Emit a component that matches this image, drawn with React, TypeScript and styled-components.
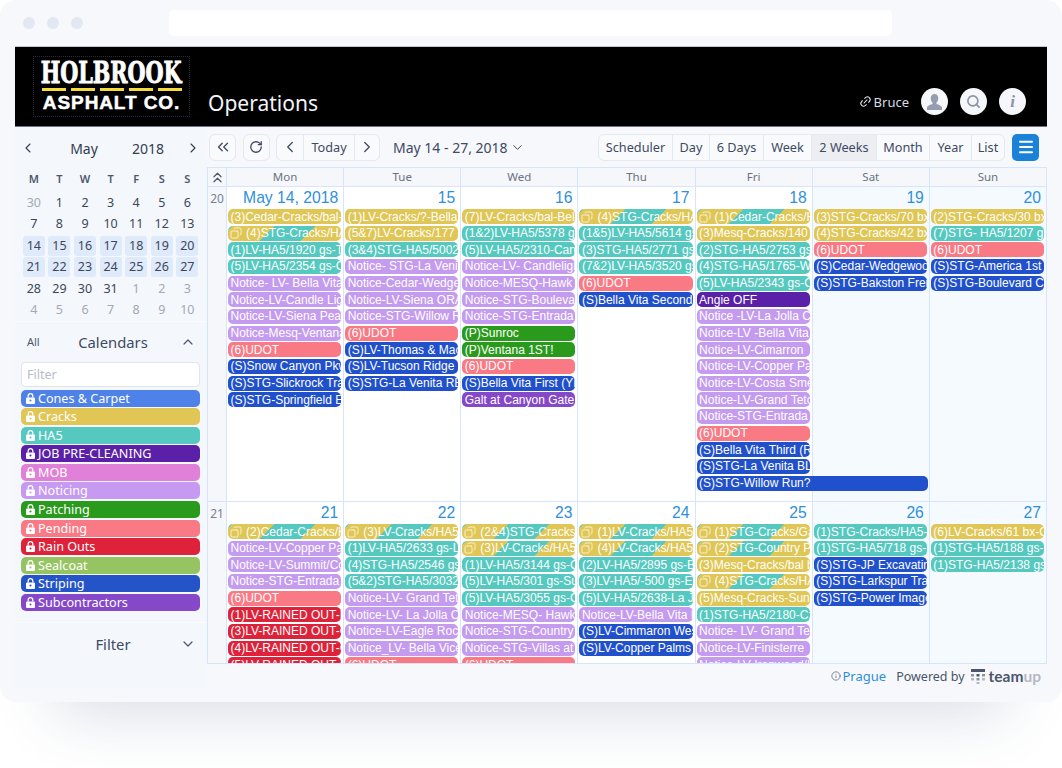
import React from 'react';
import styled, { createGlobalStyle } from 'styled-components';
import {
  ChevronDown,
  ChevronLeft,
  ChevronRight,
  ChevronUp,
  ChevronsLeft,
  ChevronsUp,
  Copy,
  Info,
  Link2,
  Menu,
  RotateCw,
  Search,
} from 'lucide-react';

const COLORS: Record<string, string> = {
  c: '#e0c655',
  h: '#55c9bf',
  n: '#c49bef',
  u: '#f97a85',
  s: '#2050cb',
  p: '#2a9a1c',
  r: '#dd2239',
  a: '#5b20a8',
  g: '#8548c9',
};

const UI_FONT = '"Noto Sans", "Open Sans", sans-serif';
const EVENT_FONT = '"Liberation Sans", Arial, sans-serif';

const GlobalStyle = createGlobalStyle`
  html {
    height: 100%;
    background: #fff;
    overflow: hidden;
  }
  body {
    margin: 0;
    height: 100%;
    font-family: ${UI_FONT};
    color: #3e4a63;
  }
`;

const Frame = styled.div`
  width: 1062px;
  height: 702px;
  box-sizing: border-box;
  background: #f6f8fb;
  border-radius: 16px;
  box-shadow: 0 66px 60px -56px rgba(60, 80, 130, 0.2);
`;

const TitleBar = styled.div`
  height: 47px;
  display: flex;
  align-items: flex-start;
  padding: 10px 170px 0 23px;
  box-sizing: border-box;
`;

const Dots = styled.div`
  display: flex;
  gap: 12px;
  width: 146px;
  padding-top: 7px;
`;

const Dot = styled.span`
  width: 12px;
  height: 12px;
  border-radius: 50%;
  background: #e2e8f2;
`;

const AddressBar = styled.div`
  flex: 1;
  height: 26px;
  background: #fff;
  border-radius: 5px;
`;

const AppShell = styled.div`
  margin: 0 15px;
  width: 1032px;
`;

const Header = styled.header`
  height: 80px;
  background: #000;
  display: flex;
  align-items: flex-end;
  padding: 0 21px 11px 18px;
  box-sizing: border-box;
  border-bottom: 1px solid #6d7280;
  box-shadow: 0 -1px 0 #c3c7d1;
`;

const Logo = styled.div`
  width: 157px;
  height: 61px;
  margin-bottom: -2px;
  border: 1px dotted #2a2a3c;
  box-sizing: border-box;
  display: flex;
  flex-direction: column;
  align-items: center;
  color: #fff;
  overflow: hidden;
`;

const LogoTop = styled.div`
  font-family: 'DejaVu Serif', serif;
  font-weight: 700;
  font-size: 30px;
  line-height: 28px;
  height: 28px;
  margin-top: 2px;
  transform: scaleX(0.69);
  white-space: nowrap;
  -webkit-text-stroke: 1px #fff;
`;

const LogoDashes = styled.div`
  display: flex;
  gap: 5px;
  margin-top: 1px;
`;

const LogoDash = styled.span`
  width: 24px;
  height: 3px;
  background: #f5dc3a;
`;

const LogoBottom = styled.div`
  font-family: ${EVENT_FONT};
  font-weight: 700;
  font-size: 19px;
  line-height: 20px;
  letter-spacing: 0.9px;
  margin-top: 2px;
  white-space: nowrap;
  -webkit-text-stroke: 0.5px #fff;
`;

const AppTitle = styled.div`
  color: #f3f5f9;
  font-size: 21px;
  line-height: 27px;
  margin-left: 18px;
  margin-bottom: -2px;
  flex: 1;
`;

const UserLink = styled.div`
  display: flex;
  align-items: center;
  gap: 2px;
  color: #d9dde6;
  font-size: 13px;
  height: 27px;
`;

const RoundButton = styled.div`
  width: 27px;
  height: 27px;
  margin-left: 12px;
  border-radius: 50%;
  background: #f6f7fa;
  color: #8a93a8;
  display: flex;
  align-items: center;
  justify-content: center;
  font-family: 'Liberation Serif', serif;
  font-style: italic;
  font-weight: 700;
  font-size: 17px;
`;

const Body = styled.div`
  display: flex;
  height: 561px;
`;

const Sidebar = styled.aside`
  width: 192px;
  flex: none;
  display: flex;
  flex-direction: column;
  background: #f4f7fb;
`;

const MiniHead = styled.div`
  display: grid;
  grid-template-columns: 16px 1fr 60px 16px;
  align-items: center;
  height: 30px;
  margin-top: 6px;
  font-size: 14px;
  color: #323c52;
  padding: 0 6px 0 5px;
  text-align: center;
`;

const MiniMonth = styled.span`
  padding-left: 7px;
`;

const MiniYear = styled.span`
  padding-right: 14px;
`;

const MiniGrid = styled.div`
  display: grid;
  grid-template-columns: repeat(7, 25.6px);
  grid-template-rows: 24.4px;
  grid-auto-rows: 21.4px;
  padding: 0 7px 0 6px;
  justify-items: center;
  align-items: center;
  margin-top: 5px;
`;

const MiniWeekday = styled.span`
  font-size: 11px;
  font-weight: 600;
  color: #4d576c;
  margin-bottom: 4px;
`;

const MiniDay = styled.span<{ $muted?: boolean; $range?: boolean }>`
  width: 22px;
  height: 20px;
  line-height: 20px;
  text-align: center;
  border-radius: 3px;
  font-size: 12.5px;
  color: ${(p) => (p.$muted ? '#a3a9b5' : '#3d4759')};
  background: ${(p) => (p.$range ? '#dfeafb' : 'transparent')};
`;

const Divider = styled.div<{ $top: number }>`
  height: 1px;
  background: #fafbfd;
  margin-top: ${(p) => p.$top}px;
`;

const SectionHead = styled.div<{ $height: number }>`
  position: relative;
  display: flex;
  align-items: center;
  justify-content: center;
  height: ${(p) => p.$height}px;
  padding-left: 4px;
  font-size: 14.8px;
  color: #3e4a63;
`;

const AllLink = styled.span`
  position: absolute;
  left: 12px;
  font-size: 11px;
  color: #4d576c;
`;

const SectionToggle = styled.span`
  position: absolute;
  right: 11px;
  display: flex;
  color: #4d576c;
`;

const FilterInput = styled.div`
  margin: 0 7px 0 6px;
  height: 25px;
  box-sizing: border-box;
  border: 1px solid #e0e4ec;
  border-radius: 4px;
  background: #fff;
  color: #b7bcc7;
  font-size: 12.5px;
  line-height: 23px;
  padding-left: 5px;
`;

const ChipList = styled.div`
  display: flex;
  flex-direction: column;
  gap: 1.55px;
  margin: 3px 7px 0 6px;
`;

const Chip = styled.div<{ $color: string }>`
  height: 17px;
  display: flex;
  align-items: center;
  gap: 3px;
  padding-left: 5px;
  border-radius: 5px;
  background: ${(p) => p.$color};
  color: #fff;
  font-size: 12.6px;
  line-height: 17px;
  white-space: nowrap;
`;

const Main = styled.main`
  flex: 1;
  min-width: 0;
  display: flex;
  flex-direction: column;
  background: #f6f8fb;
`;

const Toolbar = styled.div`
  flex: none;
  height: 40px;
  display: flex;
  align-items: center;
  padding: 0 8px 0 2px;
  box-sizing: border-box;
`;

const ToolGroup = styled.div`
  display: flex;
  height: 27px;
  box-sizing: border-box;
  border: 1px solid #e4e8ef;
  border-radius: 6px;
  background: #f9fafc;
  margin-right: 6.5px;
`;

const ToolButton = styled.div<{ $width?: number; $active?: boolean }>`
  min-width: ${(p) => p.$width ?? 25}px;
  box-sizing: border-box;
  display: flex;
  align-items: center;
  justify-content: center;
  font-size: 12.7px;
  color: #3e4a63;
  background: ${(p) => (p.$active ? '#eceef2' : 'transparent')};
  & + & {
    border-left: 1px solid #e4e8ef;
  }
`;

const DateRange = styled.div`
  flex: 1;
  display: flex;
  align-items: center;
  gap: 2px;
  font-size: 14px;
  color: #3e4a63;
  margin-left: 6.5px;
`;

const ViewGroup = styled(ToolGroup)`
  margin-right: 7px;
`;

const MenuButton = styled.div`
  width: 27px;
  height: 27px;
  border-radius: 5px;
  background: #1a82d8;
  color: #fff;
  display: flex;
  align-items: center;
  justify-content: center;
`;

const Calendar = styled.div`
  flex: none;
  height: 497px;
  overflow: hidden;
  border: 1px solid #d6e5fb;
  background: #fff;
  box-sizing: border-box;
  width: 840px;
`;

const HeadRow = styled.div`
  display: grid;
  grid-template-columns: 18px repeat(7, 1fr);
  height: 19px;
  background: #f5f7fa;
  border-bottom: 1px solid #d6e5fb;
  box-sizing: border-box;
`;

const HeadCell = styled.div`
  border-left: 1px solid #d6e5fb;
  text-align: center;
  font-size: 11.5px;
  line-height: 18px;
  color: #6a7282;
  &:first-child {
    border-left: 0;
    display: flex;
    align-items: center;
    justify-content: center;
    color: #4d576c;
  }
`;

const WeekRow = styled.div<{ $height: number }>`
  display: grid;
  grid-template-columns: 18px repeat(7, 1fr);
  height: ${(p) => p.$height}px;
  border-bottom: 1px solid #d6e5fb;
  box-sizing: border-box;
`;

const WeekNumber = styled.div`
  background: #f5f7fa;
  font-size: 12px;
  color: #7a8292;
  text-align: center;
  padding-top: 3px;
`;

const DayCell = styled.div<{ $weekend?: boolean }>`
  min-width: 0;
  border-left: 1px solid #d6e5fb;
  background: ${(p) => (p.$weekend ? '#f5faff' : '#fff')};
  padding: 0 2px 0 1px;
`;

const DayNumber = styled.div`
  height: 22px;
  text-align: right;
  font-family: ${EVENT_FONT};
  font-size: 15.7px;
  line-height: 22px;
  color: #2f8fdc;
  padding-right: 3px;
`;

const EventBar = styled.div<{ $color?: string; $span?: boolean; $mixed?: boolean }>`
  position: relative;
  z-index: ${(p) => (p.$span ? 1 : 0)};
  display: flex;
  align-items: center;
  gap: 4px;
  height: 15px;
  margin-bottom: 1.66px;
  width: ${(p) => (p.$span ? 'calc(200% + 3px)' : 'auto')};
  padding-left: ${(p) => (p.$mixed ? 2 : 2.5)}px;
  border-radius: 5px;
  overflow: hidden;
  white-space: nowrap;
  font-family: ${EVENT_FONT};
  font-size: 12px;
  line-height: 16px;
  color: #fff;
  background: ${(p) =>
    p.$mixed
      ? `linear-gradient(135deg, ${COLORS.h} 0 3px, ${COLORS.c} 3px 33px, ${COLORS.h} 33px 62px, ${COLORS.c} 62px)`
      : p.$color};
`;

const CopyIcon = styled(Copy)`
  flex: none;
  transform: scaleX(-1);
`;

const Footer = styled.footer`
  flex: 1;
  display: flex;
  align-items: center;
  justify-content: flex-end;
  padding-right: 6px;
  font-size: 12.5px;
  color: #4a5468;
  background: #f6f8fb;
`;

const PlaceLink = styled.span`
  display: flex;
  align-items: center;
  gap: 2px;
  font-size: 13px;
  color: #2f8fdc;
  margin-right: 10px;
`;

const Brand = styled.span`
  display: flex;
  align-items: center;
  gap: 4px;
  margin-left: 6px;
  font-family: Lato, sans-serif;
  font-weight: 700;
  font-size: 15.5px;
  color: #4d566c;
`;

const BrandFade = styled.span`
  color: #b3b9c5;
`;

const LockIcon = () => (
  <svg width="9" height="11" viewBox="0 0 9 11" style={{ flex: 'none' }}>
    <path
      d="M2.200 4.500V3a2.300 2.300 0 0 1 4.600 0v1.500"
      fill="none"
      stroke="#fff"
      strokeWidth="1.300"
    />
    <path
      fillRule="evenodd"
      fill="#fff"
      d="M1 4.400h7a1 1 0 0 1 1 1V10a1 1 0 0 1-1 1H1a1 1 0 0 1-1-1V5.400a1 1 0 0 1 1-1zM4.500 6.400a1 1 0 1 0 0 2 1 1 0 0 0 0-2z"
    />
  </svg>
);

const UserIcon = () => (
  <svg width="17" height="18" viewBox="0 0 17 18" fill="#969db0">
    <path d="M8.500 1c2.400 0 3.800 1.800 3.800 4.200 0 1.800-.8 3.400-1.800 4.300v1.600c1.800.7 5 1.400 5.500 3.400V17H1v-2.500c.5-2 3.700-2.700 5.500-3.400V9.500C5.500 8.600 4.700 7 4.700 5.200 4.700 2.800 6.100 1 8.500 1z" />
  </svg>
);

const TeamupIcon = () => (
  <svg width="14" height="15" viewBox="0 0 14 15">
    <rect x="0" y="0" width="14" height="3" fill="#4d566c" />
    <rect x="0" y="5" width="3" height="2.500" fill="#8a92a4" />
    <rect x="5.500" y="5" width="3" height="2.500" fill="#4d566c" />
    <rect x="11" y="5" width="3" height="2.500" fill="#8a92a4" />
    <rect x="0" y="9" width="3" height="2.500" fill="#b3b9c5" />
    <rect x="5.500" y="9" width="3" height="2.500" fill="#8a92a4" />
    <rect x="11" y="9" width="3" height="2.500" fill="#b3b9c5" />
    <rect x="5.500" y="13" width="3" height="2" fill="#b3b9c5" />
  </svg>
);

const CHIPS: [string, string][] = [
  ['Cones & Carpet', '#4f82e8'],
  ['Cracks', '#e2c655'],
  ['HA5', '#55c9c0'],
  ['JOB PRE-CLEANING', '#5b20a8'],
  ['MOB', '#e080d8'],
  ['Noticing', '#c59af0'],
  ['Patching', '#2a9a1c'],
  ['Pending', '#f97a85'],
  ['Rain Outs', '#dd2239'],
  ['Sealcoat', '#97c463'],
  ['Striping', '#2454c8'],
  ['Subcontractors', '#8548c9'],
];

const MINI_WEEKS = [
  [30, 1, 2, 3, 4, 5, 6],
  [7, 8, 9, 10, 11, 12, 13],
  [14, 15, 16, 17, 18, 19, 20],
  [21, 22, 23, 24, 25, 26, 27],
  [28, 29, 30, 31, 1, 2, 3],
  [4, 5, 6, 7, 8, 9, 10],
];

const VIEWS: [string, number][] = [
  ['Scheduler', 73],
  ['Day', 37],
  ['6 Days', 54],
  ['Week', 48],
  ['2 Weeks', 65],
  ['Month', 53],
  ['Year', 42],
  ['List', 33],
];

type Day = { label: string; events: string[] };

// first letter is the calendar colour, m is a two-calendar event, w spans two days
const WEEK_ONE: Day[] = [
  {
    label: 'May 14, 2018',
    events: [
      'c(3)Cedar-Cracks/bal-C',
      'm(4)STG-Cracks/HA5',
      'h(1)LV-HA5/1920 gs-T',
      'h(5)LV-HA5/2354 gs-C',
      'nNotice- LV- Bella Vita',
      'nNotice-LV-Candle Light',
      'nNotice-LV-Siena Peak',
      'nNotice-Mesq-Ventana',
      'u(6)UDOT',
      's(S)Snow Canyon Pkwy',
      's(S)STG-Slickrock Trail',
      's(S)STG-Springfield Est',
    ],
  },
  {
    label: '15',
    events: [
      'c(1)LV-Cracks/?-Bella V',
      'c(5&7)LV-Cracks/177 bx',
      'h(3&4)STG-HA5/5002 g',
      'nNotice- STG-La Venita',
      'nNotice-Cedar-Wedgew',
      'nNotice-LV-Siena ORA',
      'nNotice-STG-Willow Ru',
      'u(6)UDOT',
      's(S)LV-Thomas & Mack',
      's(S)LV-Tucson Ridge',
      's(S)STG-La Venita RE',
    ],
  },
  {
    label: '16',
    events: [
      'c(7)LV-Cracks/bal-Bella',
      'h(1&2)LV-HA5/5378 gs',
      'h(5)LV-HA5/2310-Cand',
      'nNotice-LV- Candlelight',
      'nNotice-MESQ-Hawk P',
      'nNotice-STG-Boulevard',
      'nNotice-STG-Entrada C',
      'p(P)Sunroc',
      'p(P)Ventana 1ST!',
      'u(6)UDOT',
      's(S)Bella Vita First (YE',
      'gGalt at Canyon Gate',
    ],
  },
  {
    label: '17',
    events: [
      'm(4)STG-Cracks/HA5',
      'h(1&5)LV-HA5/5614 gs',
      'h(3)STG-HA5/2771 gs',
      'h(7&2)LV-HA5/3520 gs',
      'u(6)UDOT',
      's(S)Bella Vita Second',
    ],
  },
  {
    label: '18',
    events: [
      'm(1)Cedar-Cracks/HA5',
      'c(3)Mesq-Cracks/140',
      'h(2)STG-HA5/2753 gs',
      'h(4)STG-HA5/1765-W',
      'h(5)LV-HA5/2343 gs-C',
      'aAngie OFF',
      'nNotice -LV-La Jolla C',
      'nNotice-LV -Bella Vita',
      'nNotice-LV-Cimarron',
      'nNotice-LV-Copper Pa',
      'nNotice-LV-Costa Sme',
      'nNotice-LV-Grand Teto',
      'nNotice-STG-Entrada',
      'u(6)UDOT',
      's(S)Bella Vita Third (R',
      's(S)STG-La Venita BL',
      'w(S)STG-Willow Run?',
    ],
  },
  {
    label: '19',
    events: [
      'c(3)STG-Cracks/70 bx',
      'c(4)STG-Cracks/42 bx',
      'u(6)UDOT',
      's(S)Cedar-Wedgewood',
      's(S)STG-Bakston Freig',
    ],
  },
  {
    label: '20',
    events: [
      'c(2)STG-Cracks/30 bx',
      'h(7)STG- HA5/1207 gs',
      'u(6)UDOT',
      's(S)STG-America 1st p',
      's(S)STG-Boulevard Co',
    ],
  },
];

const WEEK_TWO: Day[] = [
  {
    label: '21',
    events: [
      'm(2)Cedar-Cracks/HA5',
      'nNotice-LV-Copper Pa',
      'nNotice-LV-Summit/Co',
      'nNotice-STG-Entrada',
      'u(6)UDOT',
      'r(1)LV-RAINED OUT-H',
      'r(3)LV-RAINED OUT-C',
      'r(4)LV-RAINED OUT-C',
      'r(5)LV-RAINED OUT-C',
    ],
  },
  {
    label: '22',
    events: [
      'm(3)LV-Cracks/HA5-',
      'h(1)LV-HA5/2633 gs-L',
      'h(4)STG-HA5/2546 gs',
      'h(5&2)STG-HA5/3032',
      'nNotice-LV- Grand Teto',
      'nNotice-LV- La Jolla C',
      'nNotice-LV-Eagle Rock',
      'nNotice_LV- Bella Vice',
      'u(6)UDOT',
    ],
  },
  {
    label: '23',
    events: [
      'm(2&4)STG-Cracks/',
      'm(3)LV-Cracks/HA5-',
      'h(1)LV-HA5/3144 gs-C',
      'h(5)LV-HA5/301 gs-Su',
      'h(5)LV-HA5/3055 gs-C',
      'nNotice-MESQ- Hawk',
      'nNotice-STG-Country',
      'nNotice-STG-Villas at',
      'u(6)UDOT',
    ],
  },
  {
    label: '24',
    events: [
      'm(1)LV-Cracks/HA5-',
      'm(4)LV-Cracks/HA5-',
      'h(2)LV-HA5/2895 gs-B',
      'h(3)LV-HA5/-500 gs-Ea',
      'h(5)LV-HA5/2638-La J',
      'nNotice-LV-Bella Vita P',
      's(S)LV-Cimmaron Wes',
      's(S)LV-Copper Palms',
    ],
  },
  {
    label: '25',
    events: [
      'm(1)STG-Cracks/Ga',
      'm(2)STG-Country Pl',
      'c(3)Mesq-Cracks/bal b',
      'm(4)STG-Cracks/HA',
      'c(5)Mesq-Cracks-Sun',
      'h(1)STG-HA5/2180-Cz',
      'nNotice- LV- Grand Tet',
      'nNotice-LV-Finisterre',
      'nNotice-LV-Ironwood/Ira',
    ],
  },
  {
    label: '26',
    events: [
      'h(1)STG-Cracks/HA5-',
      'h(1)STG-HA5/718 gs-F',
      's(S)STG-JP Excavatin',
      's(S)STG-Larkspur Tra',
      's(S)STG-Power Image',
    ],
  },
  {
    label: '27',
    events: [
      'c(6)LV-Cracks/61 bx-C',
      'h(1)STG-HA5/188 gs-F',
      'h(1)STG-HA5/2138 gs',
    ],
  },
];

const CalEvent = ({ spec }: { spec: string }) => {
  const kind = spec[0];
  const text = spec.slice(1);
  if (kind === 'm') {
    return (
      <EventBar $mixed>
        <CopyIcon size={12} strokeWidth={1.4} />
        {text}
      </EventBar>
    );
  }
  if (kind === 'w') {
    return (
      <EventBar $color={COLORS.s} $span>
        {text}
      </EventBar>
    );
  }
  return <EventBar $color={COLORS[kind]}>{text}</EventBar>;
};

const Week = ({ number, days, height }: { number: number; days: Day[]; height: number }) => (
  <WeekRow $height={height}>
    <WeekNumber>{number}</WeekNumber>
    {days.map((day, i) => (
      <DayCell key={day.label} $weekend={i > 4}>
        <DayNumber>{day.label}</DayNumber>
        {day.events.map((spec, j) => (
          <CalEvent key={j} spec={spec} />
        ))}
      </DayCell>
    ))}
  </WeekRow>
);

const App: React.FC = () => (
  <>
    <GlobalStyle />
    <Frame>
      <TitleBar>
        <Dots>
          <Dot />
          <Dot />
          <Dot />
        </Dots>
        <AddressBar />
      </TitleBar>
      <AppShell>
        <Header>
          <Logo>
            <LogoTop>HOLBROOK</LogoTop>
            <LogoDashes>
              <LogoDash />
              <LogoDash />
              <LogoDash />
              <LogoDash />
              <LogoDash />
            </LogoDashes>
            <LogoBottom>ASPHALT CO.</LogoBottom>
          </Logo>
          <AppTitle>Operations</AppTitle>
          <UserLink>
            <Link2 size={13} style={{ transform: 'rotate(-45deg)' }} />
            Bruce
          </UserLink>
          <RoundButton>
            <UserIcon />
          </RoundButton>
          <RoundButton>
            <Search size={15} strokeWidth={2.6} />
          </RoundButton>
          <RoundButton>i</RoundButton>
        </Header>
        <Body>
          <Sidebar>
            <MiniHead>
              <ChevronLeft size={16} strokeWidth={1.6} />
              <MiniMonth>May</MiniMonth>
              <MiniYear>2018</MiniYear>
              <ChevronRight size={16} strokeWidth={1.6} />
            </MiniHead>
            <MiniGrid>
              {['M', 'T', 'W', 'T', 'F', 'S', 'S'].map((d, i) => (
                <MiniWeekday key={i}>{d}</MiniWeekday>
              ))}
              {MINI_WEEKS.map((week, w) =>
                week.map((d, i) => (
                  <MiniDay
                    key={`${w}-${i}`}
                    $range={w === 2 || w === 3}
                    $muted={(w === 0 && i === 0) || (w === 4 && i > 3) || w === 5}
                  >
                    {d}
                  </MiniDay>
                )),
              )}
            </MiniGrid>
            <Divider $top={0} />
            <SectionHead $height={40}>
              <AllLink>All</AllLink>
              Calendars
              <SectionToggle>
                <ChevronUp size={16} strokeWidth={1.8} />
              </SectionToggle>
            </SectionHead>
            <FilterInput>Filter</FilterInput>
            <ChipList>
              {CHIPS.map(([name, color]) => (
                <Chip key={name} $color={color}>
                  <LockIcon />
                  {name}
                </Chip>
              ))}
            </ChipList>
            <Divider $top={11} />
            <SectionHead $height={42}>
              Filter
              <SectionToggle>
                <ChevronDown size={16} strokeWidth={1.8} />
              </SectionToggle>
            </SectionHead>
          </Sidebar>
          <Main>
            <Toolbar>
              <ToolGroup>
                <ToolButton>
                  <ChevronsLeft size={18} strokeWidth={1.7} />
                </ToolButton>
              </ToolGroup>
              <ToolGroup>
                <ToolButton>
                  <RotateCw size={14} strokeWidth={2.2} />
                </ToolButton>
              </ToolGroup>
              <ToolGroup>
                <ToolButton $width={26}>
                  <ChevronLeft size={18} strokeWidth={1.7} />
                </ToolButton>
                <ToolButton $width={51}>Today</ToolButton>
                <ToolButton $width={25}>
                  <ChevronRight size={18} strokeWidth={1.7} />
                </ToolButton>
              </ToolGroup>
              <DateRange>
                May 14 - 27, 2018
                <ChevronDown size={15} strokeWidth={1.6} />
              </DateRange>
              <ViewGroup>
                {VIEWS.map(([name, width]) => (
                  <ToolButton key={name} $width={width} $active={name === '2 Weeks'}>
                    {name}
                  </ToolButton>
                ))}
              </ViewGroup>
              <MenuButton>
                <Menu size={18} strokeWidth={2.6} />
              </MenuButton>
            </Toolbar>
            <Calendar>
              <HeadRow>
                <HeadCell>
                  <ChevronsUp size={17} strokeWidth={1.7} />
                </HeadCell>
                {['Mon', 'Tue', 'Wed', 'Thu', 'Fri', 'Sat', 'Sun'].map((d) => (
                  <HeadCell key={d}>{d}</HeadCell>
                ))}
              </HeadRow>
              <Week number={20} days={WEEK_ONE} height={315} />
              <Week number={21} days={WEEK_TWO} height={240} />
            </Calendar>
            <Footer>
              <PlaceLink>
                <Info size={10} color="#6a7282" />
                Prague
              </PlaceLink>
              Powered by
              <Brand>
                <TeamupIcon />
                <span>
                  team<BrandFade>up</BrandFade>
                </span>
              </Brand>
            </Footer>
          </Main>
        </Body>
      </AppShell>
    </Frame>
  </>
);

export default App;
